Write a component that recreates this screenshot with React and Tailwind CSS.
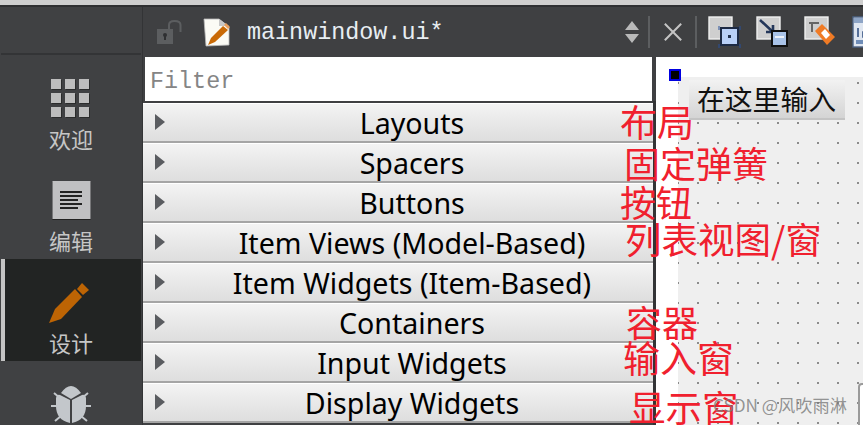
const CJK = '"Noto Sans CJK SC","Noto Sans",sans-serif';

const rows = [
  'Layouts',
  'Spacers',
  'Buttons',
  'Item Views (Model-Based)',
  'Item Widgets (Item-Based)',
  'Containers',
  'Input Widgets',
  'Display Widgets',
];

const notes = [
  ['布局', 620, 97, 37],
  ['固定弹簧', 624, 138, 36],
  ['按钮', 620, 177, 36],
  ['列表视图/窗', 625, 215, 36.5],
  ['容器', 626, 297, 36],
  ['输入窗', 623, 333, 37],
  ['显示窗', 629, 383, 36.5],
];

function Side({ label, active, icon, h, pt }) {
  return (
    <div
      className={`flex flex-col items-center ${active ? 'bg-[#222423] border-l-[4px] pr-[4px] border-[#c4c4c4]' : ''}`}
      style={{ height: h, paddingTop: pt }}
    >
      {icon}
      <div className="text-[22px] leading-[26px] text-[#c6c6c6] mt-[6px]" style={{ fontFamily: CJK }}>{label}</div>
    </div>
  );
}

const Grid = () => (
  <svg width="40" height="40" viewBox="0 0 40 40" className="block">
    {[0, 14, 28].flatMap((y) =>
      [0, 14, 28].map((x) => (
        <g key={`${x}-${y}`}>
          <rect x={x + 1} y={y + 1} width="10" height="10" fill="#1e1e1e" opacity=".6" />
          <rect x={x} y={y} width="10" height="10" fill="#bdbdbd" />
        </g>
      ))
    )}
  </svg>
);

const Doc = () => (
  <svg width="39" height="40" viewBox="0 0 39 40" className="block">
    <rect x="0.5" y="1" width="38" height="38" fill="#222" />
    <rect x="0.5" y="0" width="38" height="38" fill="#c0c0c2" />
    <path d="M8 11h22M8 15h22M8 19h18M8 23h22M8 27h18" stroke="#222" strokeWidth="1.8" />
  </svg>
);

const Pencil = () => (
  <svg width="40" height="40" viewBox="0 0 40 40" className="block -ml-[4px]">
    <path d="M0 40 L6 26 L26 6 L33 14 L12 36 Z" fill="#bd6404" />
    <path d="M28 6 L33 0 L40 7 L34 12 Z" fill="#bd6404" />
  </svg>
);

const Bug = () => (
  <svg width="40" height="40" viewBox="0 0 40 40" className="block">
    <path d="M0 21h6M34 21h6M3 8l6 5M37 8l-6 5M4 36l6-5M36 36l-6-5" stroke="#c3c7cb" strokeWidth="2" />
    <path d="M10 8 Q20 -6 30 8 L20 14 Z" fill="#c3c7cb" />
    <path d="M5 13 Q6 9 9 10 L19 15 V38 Q5 35 5 21 Z" fill="#c3c7cb" />
    <path d="M35 13 Q34 9 31 10 L21 15 V38 Q35 35 35 21 Z" fill="#c3c7cb" />
  </svg>
);

const Lock = () => (
  <svg width="25" height="24" viewBox="0 0 25 24" className="block shrink-0">
    <rect x="0" y="9" width="16" height="15" fill="#5c5e60" />
    <circle cx="8" cy="15" r="2" fill="#2f3032" />
    <rect x="7" y="15" width="2" height="5" fill="#2f3032" />
    <path d="M12 9 V5 Q12 1 17.5 1 Q23.5 1 23.5 5 V12" fill="none" stroke="#5c5e60" strokeWidth="2" />
  </svg>
);

const FileEdit = () => (
  <svg width="28" height="29" viewBox="0 0 28 29" className="block shrink-0">
    <path d="M1 1 H16 L26 9 V27 L3 28 Z" fill="#fbfbf5" stroke="#b9b9b9" strokeWidth="0.8" />
    <path d="M16 1 V8 H26 Z" fill="#c8c8c8" />
    <path d="M5 27 L8 20 L20 8 L25 12 L12 24 Z" fill="#c96a06" />
    <path d="M21 7 L23 5 L27 9 L25 11 Z" fill="#e8a060" />
  </svg>
);

const FormA = () => (
  <svg width="33" height="33" viewBox="0 0 33 33" className="block shrink-0">
    <rect x="1" y="1" width="23" height="22" fill="#cfcfcf" stroke="#f0f0f0" strokeWidth="1.4" />
    <rect x="13" y="12" width="17" height="17" fill="#b9d0f7" stroke="#1d2a44" strokeWidth="2" />
    <rect x="20" y="19" width="3" height="3" fill="#22324f" />
    <path d="M11 10v4M32 10v4M11 28v4M32 28v4" stroke="#29509b" strokeWidth="1" />
  </svg>
);

const FormB = () => (
  <svg width="33" height="33" viewBox="0 0 33 33" className="block shrink-0">
    <rect x="1" y="1" width="23" height="22" fill="#cfcfcf" stroke="#f0f0f0" strokeWidth="1.4" />
    <path d="M4 4 L17 16 M17 9 V16 H10" stroke="#24375a" strokeWidth="2.6" fill="none" />
    <rect x="15" y="14" width="17" height="17" fill="#111" />
    <rect x="17" y="16" width="13" height="13" fill="#a9c3e8" />
    <rect x="19" y="20" width="9" height="2" fill="#eef3fb" />
  </svg>
);

const FormC = () => (
  <svg width="33" height="33" viewBox="0 0 33 33" className="block shrink-0">
    <rect x="1" y="1" width="23" height="22" fill="#cfcfcf" stroke="#f0f0f0" strokeWidth="1.4" />
    <path d="M5 7h10M8 7v9" stroke="#666" strokeWidth="2" />
    <path d="M11 15 L18 8 L31 21 L23 29 Z" fill="#f07b25" />
    <path d="M17 17 L21 13 L26 19 L22 23 Z" fill="#fff" />
  </svg>
);

const FormD = () => (
  <svg width="33" height="33" viewBox="0 0 33 33" className="block shrink-0">
    <rect x="1" y="1" width="30" height="30" fill="#dfe6f0" stroke="#4c6284" strokeWidth="1.4" />
    <rect x="2" y="2" width="28" height="5" fill="#8ea5c6" />
    <path d="M6 12v9M11 12h5v4h-5v5h5" stroke="#2b4a7c" strokeWidth="1.5" fill="none" />
    <rect x="4" y="24" width="24" height="4" fill="#6f8db8" />
  </svg>
);

export default function App() {
  return (
    <div className="relative w-[863px] h-[425px] overflow-hidden bg-[#3f4042] flex flex-col">
      <div className="h-[5px] bg-[#cfcfcf] shrink-0" />
      <div className="h-[2px] bg-[#2f3032] shrink-0" />
      <div className="flex flex-1 min-h-0">
        <aside className="w-[142px] shrink-0 bg-[#404143] px-px">
          <div className="h-[46px] border-b-2 border-[#333436] box-content" />
          <Side label="欢迎" icon={<Grid />} h={103} pt={24} />
          <Side label="编辑" icon={<Doc />} h={101} pt={23} />
          <Side label="设计" active icon={<Pencil />} h={102} pt={24} />
          <Side label="" icon={<Bug />} h={70} pt={24} />
        </aside>
        <div className="w-px bg-[#333436] shrink-0" />
        <main className="flex-1 min-w-0 flex flex-col overflow-hidden">
          <div className="h-[50px] shrink-0 flex items-center bg-[#3f4042] pl-[14px]">
            <Lock />
            <div className="ml-[21px] shrink-0"><FileEdit /></div>
            <div
              className="ml-[16px] w-[378px] shrink-0 text-[23.4px] pt-[4px] text-[#e8eef2]"
              style={{ fontFamily: '"Liberation Mono",monospace' }}
            >
              mainwindow.ui*
            </div>
            <svg width="14" height="22" viewBox="0 0 14 22" className="block shrink-0">
              <path d="M7 0 L14 9 H0 Z M7 22 L0 13 H14 Z" fill="#b9b9b9" />
            </svg>
            <div className="w-[2px] h-[32px] bg-[#5c5e60] ml-[9px] shrink-0" />
            <svg width="20" height="20" viewBox="0 0 22 22" className="block ml-[13px] shrink-0">
              <path d="M2 2 L20 20 M20 2 L2 20" stroke="#c4c4c4" strokeWidth="2.2" />
            </svg>
            <div className="w-[2px] h-[32px] bg-[#5c5e60] ml-[12px] shrink-0" />
            <div className="ml-[11px] flex gap-[15px] shrink-0">
              <FormA />
              <FormB />
              <FormC />
              <FormD />
            </div>
          </div>
          <div className="flex-1 min-h-0 flex">
            <div className="w-[510px] shrink-0">
              <div
                className="h-[44px] ml-[2px] mr-px bg-white text-[23.4px] leading-[50px] pl-[5px] text-[#858585]"
                style={{ fontFamily: '"Liberation Mono",monospace' }}
              >
                Filter
              </div>
              <div className="h-[2px] bg-[#3f4042]" />
              {rows.map((r) => (
                <div
                  key={r}
                  className="relative h-[40px] border-b-[2px] border-[#a5a5a5] border-t border-t-white bg-gradient-to-b from-[#f3f3f3] to-[#dedede] flex items-center justify-center pl-[28px] text-[28.6px] text-black"
                  style={{ fontFamily: '"Noto Sans",sans-serif' }}
                >
                  <svg width="10" height="16" viewBox="0 0 10 16" className="absolute left-[12px] top-[10px]">
                    <path d="M0 0 L10 8 L0 16 Z" fill="#5a5c60" />
                  </svg>
                  <span className="leading-[38px] whitespace-nowrap">{r}</span>
                </div>
              ))}
            </div>
            <div className="w-[3px] bg-[#333436] shrink-0 mt-[44px]" />
            <div className="flex-1 bg-white relative flex">
              <div className="w-[22px] shrink-0" />
              <div className="flex-1 mt-[20px] bg-[#efefef] bg-[radial-gradient(#8c8c8c_0.8px,transparent_1px)] bg-[length:20px_20px] bg-[position:-10px_36px]" />
              <div className="absolute left-[13px] top-[12px] w-[12px] h-[12px] bg-black border-[2px] border-[#0000e0]" />
              <div
                className="absolute left-[33px] top-[23px] w-[156px] h-[40px] bg-gradient-to-b from-[#f2f2f2] to-[#d4d4d4] border-b-2 border-[#c4c4c4] text-[27.8px] leading-[36px] pl-[8px] text-[#111]"
                style={{ fontFamily: CJK }}
              >
                在这里输入
              </div>
              <div className="absolute right-[-8px] top-[326px] w-[13px] h-[60px] bg-white border-2 border-[#9a9a9a] rounded-[4px]" />
            </div>
          </div>
        </main>
      </div>
      {notes.map(([t, x, y, s]) => (
        <div
          key={t}
          className="absolute text-[#f0202e] leading-[48px] whitespace-nowrap"
          style={{ left: x, top: y, fontSize: s, fontFamily: CJK }}
        >
          {t}
        </div>
      ))}
      <div
        className="absolute left-[713px] top-[394px] text-[17.2px] leading-[22px] text-[#7a7a7a]/80 whitespace-nowrap"
        style={{ fontFamily: CJK }}
      >
        CSDN @风吹雨淋
      </div>
    </div>
  );
}
